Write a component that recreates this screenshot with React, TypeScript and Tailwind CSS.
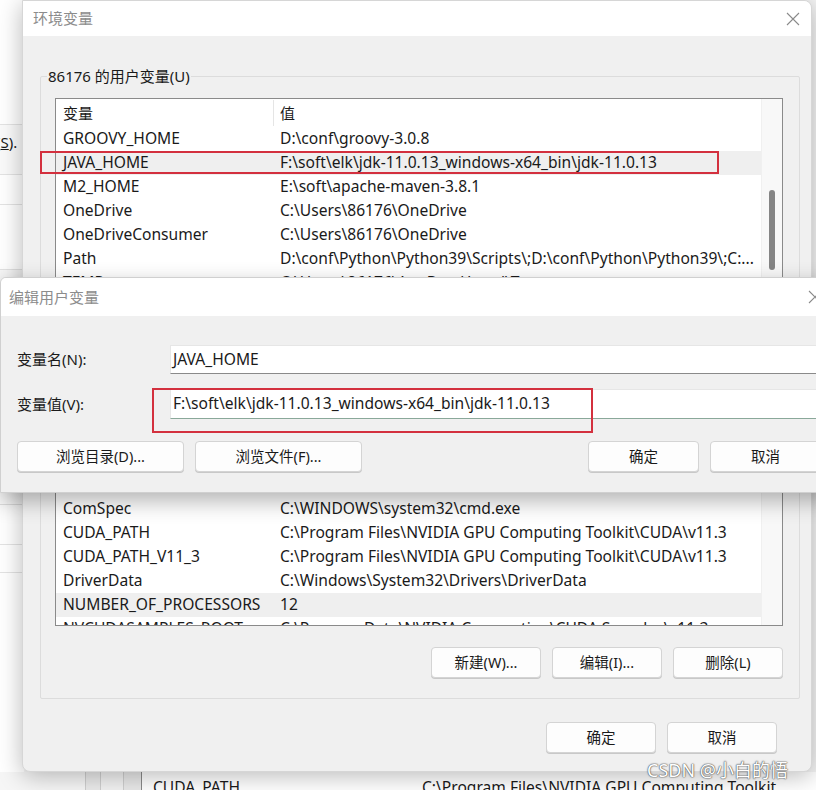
import React from "react";

const FONT = {
  fontFamily: '"Noto Sans", "Noto Sans CJK SC", sans-serif',
};

type Row = { name: string; value: string; hl?: boolean };

const topRows: Row[] = [
  { name: "GROOVY_HOME", value: "D:\\conf\\groovy-3.0.8" },
  { name: "JAVA_HOME", value: "F:\\soft\\elk\\jdk-11.0.13_windows-x64_bin\\jdk-11.0.13", hl: true },
  { name: "M2_HOME", value: "E:\\soft\\apache-maven-3.8.1" },
  { name: "OneDrive", value: "C:\\Users\\86176\\OneDrive" },
  { name: "OneDriveConsumer", value: "C:\\Users\\86176\\OneDrive" },
  { name: "Path", value: "D:\\conf\\Python\\Python39\\Scripts\\;D:\\conf\\Python\\Python39\\;C:..." },
  { name: "TEMP", value: "C:\\Users\\86176\\AppData\\Local\\Temp" },
  { name: "TMP", value: "C:\\Users\\86176\\AppData\\Local\\Temp" },
];

const bottomRows: Row[] = [
  { name: "ComSpec", value: "C:\\WINDOWS\\system32\\cmd.exe" },
  { name: "CUDA_PATH", value: "C:\\Program Files\\NVIDIA GPU Computing Toolkit\\CUDA\\v11.3" },
  { name: "CUDA_PATH_V11_3", value: "C:\\Program Files\\NVIDIA GPU Computing Toolkit\\CUDA\\v11.3" },
  { name: "DriverData", value: "C:\\Windows\\System32\\Drivers\\DriverData" },
  { name: "NUMBER_OF_PROCESSORS", value: "12", hl: true },
  { name: "NVCUDASAMPLES_ROOT", value: "C:\\ProgramData\\NVIDIA Corporation\\CUDA Samples\\v11.3" },
];

function ListRow({ r }: { r: Row }) {
  return (
    <div
      className={`flex h-[24px] shrink-0 items-center whitespace-nowrap text-[15.6px] text-[#1a1a1a] ${
        r.hl ? "bg-[#efefef]" : ""
      }`}
    >
      <div className="w-[217px] shrink-0 pl-[7px]">{r.name}</div>
      <div className="flex-1 overflow-hidden pl-[7px]">{r.value}</div>
    </div>
  );
}

function WinButton({ label, w }: { label: string; w: string }) {
  return (
    <div
      className={`${w} flex h-[31px] shrink-0 items-center justify-center rounded-[4px] border border-[#d4d4d4] bg-[#fdfdfd] text-[14.5px] text-[#1a1a1a] shadow-[0_1px_0_#c8c8c8]`}
    >
      {label}
    </div>
  );
}

function CloseX({ color = "#6b6b6b" }: { color?: string }) {
  return (
    <svg width="14" height="14" viewBox="0 0 14 14">
      <path d="M1 1L13 13M13 1L1 13" stroke={color} strokeWidth="1.1" fill="none" />
    </svg>
  );
}

export default function App() {
  return (
    <div className="relative h-[790px] w-[816px] overflow-hidden bg-[#f4f4f4]" style={FONT}>
      {/* Background window (partially visible) */}
      <div className="absolute inset-0">
        <div className="absolute left-0 top-0 h-[790px] w-[24px] bg-white">
          <div className="h-[125px] border-b border-[#e3e3e3]" />
          <div className="h-[50px] border-b border-[#e3e3e3] bg-[#fafafa]">
            <div className="relative -left-[4px] pt-[6px] text-[15px] text-[#1a1a1a]">
              (<span className="underline">S</span>).
            </div>
          </div>
          <div className="h-[30px] border-b border-[#e3e3e3]" />
          <div className="h-[65px] border-b border-[#e3e3e3]" />
          <div className="h-[215px] border-b border-[#d8d8d8] bg-[#f7f7f7]">
            <div className="-ml-[4px] whitespace-nowrap pt-[194px] text-[15px] text-[#1a1a1a]">
              <span className="underline">N</span>)...
            </div>
          </div>
          <div className="h-[20px] border-b border-[#e3e3e3]" />
          <div className="h-[40px] border-b border-[#e3e3e3]" />
          <div className="h-[28px] border-b border-[#e3e3e3]" />
        </div>
        <div className="absolute left-0 top-[772px] flex h-[18px] w-[816px]">
          <div className="w-[85px] bg-[#f6f6f6]" />
          <div className="w-[15px] border-l border-[#cfcfcf] bg-[#ebebeb]" />
          <div className="w-[23px] border-l border-[#cfcfcf] bg-[#f2f2f2]" />
          <div className="w-[18px] border-l border-[#cfcfcf] bg-[#e9e9e9]" />
          <div className="flex flex-1 whitespace-nowrap border-l border-[#8a8a8a] bg-white pt-[4px] text-[15.6px] text-[#1a1a1a]">
            <div className="w-[280px] pl-[11px]">CUDA_PATH</div>
            <div>C:\Program Files\NVIDIA GPU Computing Toolkit</div>
          </div>
        </div>
      </div>

      {/* Main dialog: 环境变量 */}
      <div className="absolute left-[22px] top-0 flex h-[772px] w-[790px] flex-col overflow-hidden rounded-b-[8px] rounded-tr-[8px] border border-[#d6d6d6] bg-[#f0f0f0] shadow-[0_4px_24px_rgba(0,0,0,0.28)]">
        <div className="flex h-[35px] shrink-0 items-center justify-between bg-white pl-[10px] pr-[11px]">
          <span className="text-[15px] text-[#8c8c8c]">环境变量</span>
          <CloseX color="#8a8a8a" />
        </div>
        <div className="flex flex-1 flex-col px-[17px] pt-[40px]">
          {/* Group box */}
          <div className="relative h-[623px] w-[760px] rounded-[2px] border border-[#dcdcdc] px-[14px] pt-[21px]">
            <span className="absolute -top-[12px] left-[6px] bg-[#f0f0f0] px-[1px] text-[15px] leading-[22px] text-[#1a1a1a]">
              86176 的用户变量(U)
            </span>
            {/* List */}
            <div className="flex h-[528px] w-[728px] overflow-hidden border border-[#8a8a8a] bg-white">
              <div className="flex flex-1 flex-col">
                <div className="flex h-[28px] shrink-0 items-center text-[15px] text-[#1a1a1a]">
                  <div className="w-[217px] shrink-0 pl-[7px]">变量</div>
                  <div className="h-[26px] w-px bg-[#e5e5e5]" />
                  <div className="pl-[6px]">值</div>
                </div>
                {topRows.map((r) => (
                  <ListRow key={r.name} r={r} />
                ))}
                <div className="h-[178px] shrink-0" />
                {bottomRows.map((r) => (
                  <ListRow key={r.name} r={r} />
                ))}
              </div>
              <div className="w-[21px] shrink-0 border-l border-[#f0f0f0] bg-[#f8f8f8] pl-[7px] pt-[91px]">
                <div className="h-[80px] w-[6px] rounded-full bg-[#858585]" />
              </div>
            </div>
            <div className="mt-[21px] flex w-[728px] justify-end gap-[11px]">
              <WinButton label="新建(W)..." w="w-[110px]" />
              <WinButton label="编辑(I)..." w="w-[110px]" />
              <WinButton label="删除(L)" w="w-[110px]" />
            </div>
          </div>
          <div className="mt-[23px] flex w-[737px] justify-end gap-[11px]">
            <WinButton label="确定" w="w-[110px]" />
            <WinButton label="取消" w="w-[110px]" />
          </div>
        </div>
      </div>

      {/* Red annotation around JAVA_HOME row */}
      <div className="absolute left-[40px] top-[151px] h-[23px] w-[679px] border-2 border-[#d3303e]" />

      {/* Edit dialog: 编辑用户变量 */}
      <div className="absolute left-0 top-[277px] flex h-[216px] w-[840px] flex-col overflow-hidden rounded-tl-[6px] border border-[#d0d0d0] bg-[#f0f0f0] shadow-[0_8px_22px_rgba(0,0,0,0.3)]">
        <div className="flex h-[38px] shrink-0 items-center justify-between bg-white pl-[8px] pr-[17px]">
          <span className="text-[15px] text-[#8c8c8c]">编辑用户变量</span>
          <CloseX color="#8a8a8a" />
        </div>
        <div className="flex flex-col px-[16px] pt-[29px]">
          <div className="flex h-[29px] items-center">
            <div className="w-[153px] text-[15px] text-[#1a1a1a]">变量名(N):</div>
            <div className="flex h-[29px] flex-1 items-center border border-[#e6e6e6] border-b-[#8a8a8a] bg-white pl-[2px] text-[15.6px] text-[#1a1a1a]">
              JAVA_HOME
            </div>
          </div>
          <div className="mt-[15px] flex h-[30px] items-center">
            <div className="w-[153px] text-[15px] text-[#1a1a1a]">变量值(V):</div>
            <div className="flex h-[30px] flex-1 items-center whitespace-nowrap border border-[#e6e6e6] border-b-[#8aa89a] bg-white pl-[2px] text-[15.6px] text-[#1a1a1a]">
              F:\soft\elk\jdk-11.0.13_windows-x64_bin\jdk-11.0.13
            </div>
          </div>
          <div className="mt-[22px] flex items-center gap-[11px]">
            <WinButton label="浏览目录(D)..." w="w-[167px]" />
            <WinButton label="浏览文件(F)..." w="w-[167px]" />
            <div className="w-[204px] shrink-0" />
            <WinButton label="确定" w="w-[111px]" />
            <WinButton label="取消" w="w-[111px]" />
          </div>
        </div>
      </div>

      {/* Red annotation around value input */}
      <div className="absolute left-[152px] top-[388px] h-[45px] w-[441px] border-2 border-[#d3303e]" />

      {/* Watermark */}
      <div className="absolute left-[647px] top-[757px] whitespace-nowrap text-[18px] text-white [text-shadow:0_0_1px_#555,0_0_1px_#555,0_0_2px_#777]">
        CSDN @小白的悟
      </div>
    </div>
  );
}
